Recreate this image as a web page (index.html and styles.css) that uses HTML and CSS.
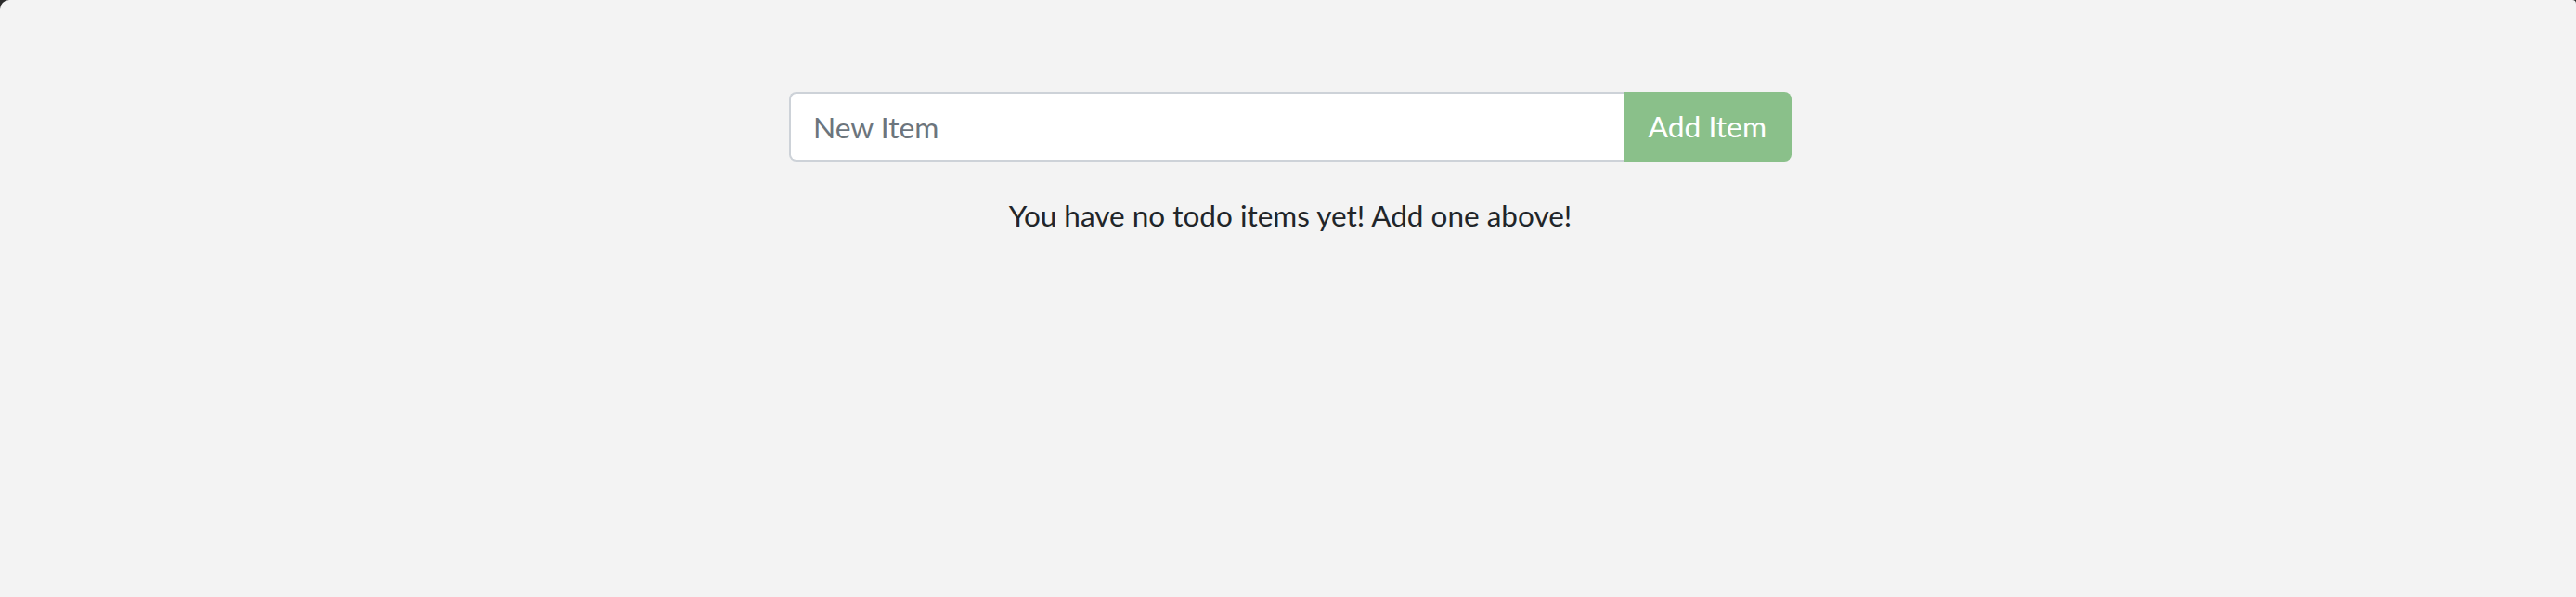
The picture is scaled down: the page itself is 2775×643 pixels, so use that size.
FILE: index.html
```html
<!DOCTYPE html>
<html lang="en">
<head>
<meta charset="utf-8">
<title>Todo</title>
<link rel="stylesheet" href="styles.css">
</head>
<body>
<div class="page">
  <main class="todo">
    <form class="add-form">
      <input class="add-input" type="text" placeholder="New Item">
      <button class="add-btn" type="button" disabled>Add Item</button>
    </form>
    <p class="empty">You have no todo items yet! Add one above!</p>
  </main>
</div>
</body>
</html>
```
FILE: styles.css
```css
html {
  background: #2b2b2b;
  height: 100%;
}
body {
  margin: 0;
  height: 100%;
  background: #f3f3f3;
  border-top-left-radius: 10px;
  border-top-right-radius: 4px;
  font-family: Lato, "Open Sans", sans-serif;
  color: #212529;
}
.page {
  padding-top: 99px;
  padding-left: 5px;
}
.todo {
  width: 1080px;
  margin: 0 auto;
}
.add-form {
  display: flex;
  margin: 0;
}
.add-input {
  flex: 1;
  min-width: 0;
  height: 75px;
  box-sizing: border-box;
  padding: 12px 24px;
  font-family: inherit;
  font-size: 31.75px;
  line-height: 1.5;
  color: #495057;
  background: #fff;
  border: 2px solid #cdd2d8;
  border-right: none;
  border-radius: 7.8px 0 0 7.8px;
  outline: none;
}
.add-input::placeholder {
  color: #6c757d;
  opacity: 1;
}
.add-btn {
  height: 75px;
  box-sizing: border-box;
  padding: 12px 27px;
  font-family: inherit;
  font-size: 31.75px;
  line-height: 1.5;
  color: #fff;
  background: #8ac08a;
  border: none;
  border-radius: 0 7.8px 7.8px 0;
}
.empty {
  margin: 35px 0 0;
  text-align: center;
  font-size: 31.5px;
  line-height: 1.5;
}
```
